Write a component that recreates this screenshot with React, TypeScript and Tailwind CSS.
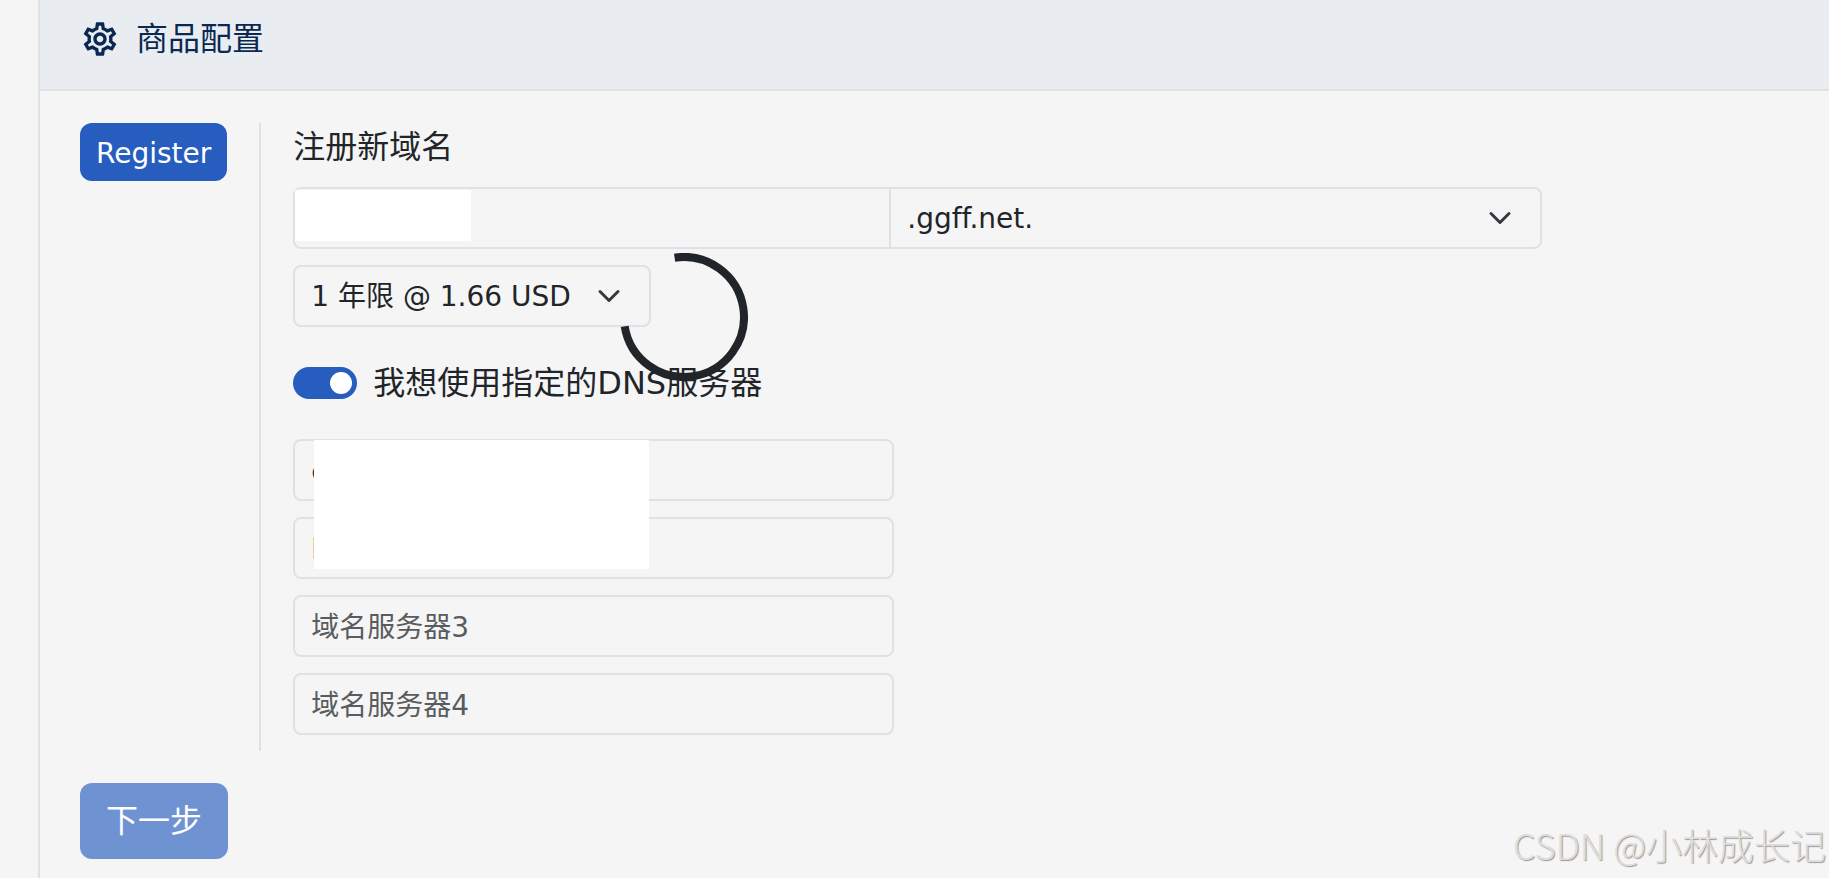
import { useState } from "react";
import { MdOutlineSettings } from "react-icons/md";

const fieldClass =
  "h-[62px] w-full rounded-lg border-2 border-[#dee2e6] bg-transparent px-4 pt-0.5 text-[28px] text-[#212529] placeholder:text-[#595c5f] placeholder:opacity-100 focus:outline-none";

function Chevron({ className }: { className: string }) {
  return (
    <svg
      className={`pointer-events-none absolute top-1/2 size-6 -translate-y-1/2 ${className}`}
      viewBox="0 0 16 16"
      fill="none"
      stroke="#343a40"
      strokeWidth="2"
      strokeLinecap="round"
      strokeLinejoin="round"
      aria-hidden="true"
    >
      <path d="m2 5 6 6 6-6" />
    </svg>
  );
}

function Spinner() {
  return (
    <svg className="absolute left-[359px] top-[130px] size-32" viewBox="0 0 128 128" fill="none" role="status">
      <path d="M54.6 4.7A60 60 0 1 1 4.7 73.4" stroke="#212529" strokeWidth="8" />
    </svg>
  );
}

const servers = [
  { id: "ns1", label: "域名服务器1", value: "c" },
  { id: "ns2", label: "域名服务器2", value: "l" },
  { id: "ns3", label: "域名服务器3", value: "" },
  { id: "ns4", label: "域名服务器4", value: "" },
];

export default function App() {
  const [customDns, setCustomDns] = useState(true);

  return (
    <div className="flex min-h-screen overflow-hidden bg-[#f5f5f5] pl-[38px] font-['DejaVu_Sans','Noto_Sans_CJK_SC',sans-serif] text-[#212529] [font-variant-ligatures:none]">
      <main className="relative flex-1 border-l-2 border-[#dee2e6]">
        <header className="flex items-center gap-4 border-b-2 border-[#dee2e6] bg-[#e9edf2] px-10 pb-[26px] pt-[15px] text-[#0a2850]">
          <MdOutlineSettings className="size-10" aria-hidden="true" />
          <h1 className="text-[32px] leading-[48px]">商品配置</h1>
        </header>

        <form className="px-10 pt-8" onSubmit={(e) => e.preventDefault()}>
          <div className="flex">
            <nav className="border-r-2 border-[#dee2e6] pr-8">
              <button
                type="button"
                className="rounded-xl bg-[#265dbf] px-4 pb-1.5 pt-2.5 text-[28px] leading-[42px] text-white"
              >
                Register
              </button>
            </nav>

            <div className="relative flex-1 pb-4 pl-8">
              <label htmlFor="domain" className="mb-4 block text-[32px] leading-[48px]">
                注册新域名
              </label>
              <div className="mb-4 flex h-[62px] w-full max-w-[1249px] rounded-lg border-2 border-[#dee2e6]">
                <div className="relative w-[594px] shrink-0">
                  <input id="domain" className="h-full w-full bg-transparent px-4 text-[28px] focus:outline-none" />
                  <span className="absolute left-0 top-px h-[51px] w-44 bg-white" />
                </div>
                <div className="relative flex-1 border-l-2 border-[#dee2e6]">
                  <select
                    aria-label="域名后缀"
                    className="h-full w-full appearance-none bg-transparent px-4 pt-0.5 text-[28px] focus:outline-none"
                  >
                    <option>.ggff.net.</option>
                  </select>
                  <Chevron className="right-7" />
                </div>
              </div>

              <div className="relative mb-10 w-[358px]">
                <select aria-label="年限" className={`${fieldClass} block appearance-none`}>
                  <option>1 年限 @ 1.66 USD</option>
                </select>
                <Chevron className="right-[30px]" />
              </div>

              <div className="mb-8 flex items-center gap-4">
                <input
                  id="dns"
                  type="checkbox"
                  role="switch"
                  checked={customDns}
                  onChange={(e) => setCustomDns(e.target.checked)}
                  className="flex h-8 w-16 appearance-none items-center justify-start rounded-full bg-[#adb5bd] px-[5px] before:size-[22px] before:rounded-full before:bg-white checked:justify-end checked:bg-[#265dbf]"
                />
                <label htmlFor="dns" className="text-[32px] leading-8">
                  我想使用指定的DNS服务器
                </label>
              </div>

              <div className="relative flex max-w-[601px] flex-col gap-4 pt-2">
                {servers.map((s) => (
                  <input
                    key={s.id}
                    aria-label={s.label}
                    placeholder={s.label}
                    defaultValue={s.value}
                    className={fieldClass}
                  />
                ))}
                <span className="absolute left-[21px] top-[9px] h-[129px] w-[335px] bg-white" />
              </div>

              <Spinner />
            </div>
          </div>

          <button
            type="submit"
            disabled
            className="mt-8 rounded-xl bg-[#6e92d2] px-[26px] py-[14px] text-[32px] leading-[48px] text-white"
          >
            下一步
          </button>
        </form>

        <p className="absolute bottom-2 right-[3px] font-['Noto_Sans_CJK_SC',sans-serif] text-[36px] font-light leading-[52px] text-[#dedede] [text-shadow:1px_1px_1px_#999]">
          CSDN @小林成长记
        </p>
      </main>
    </div>
  );
}
